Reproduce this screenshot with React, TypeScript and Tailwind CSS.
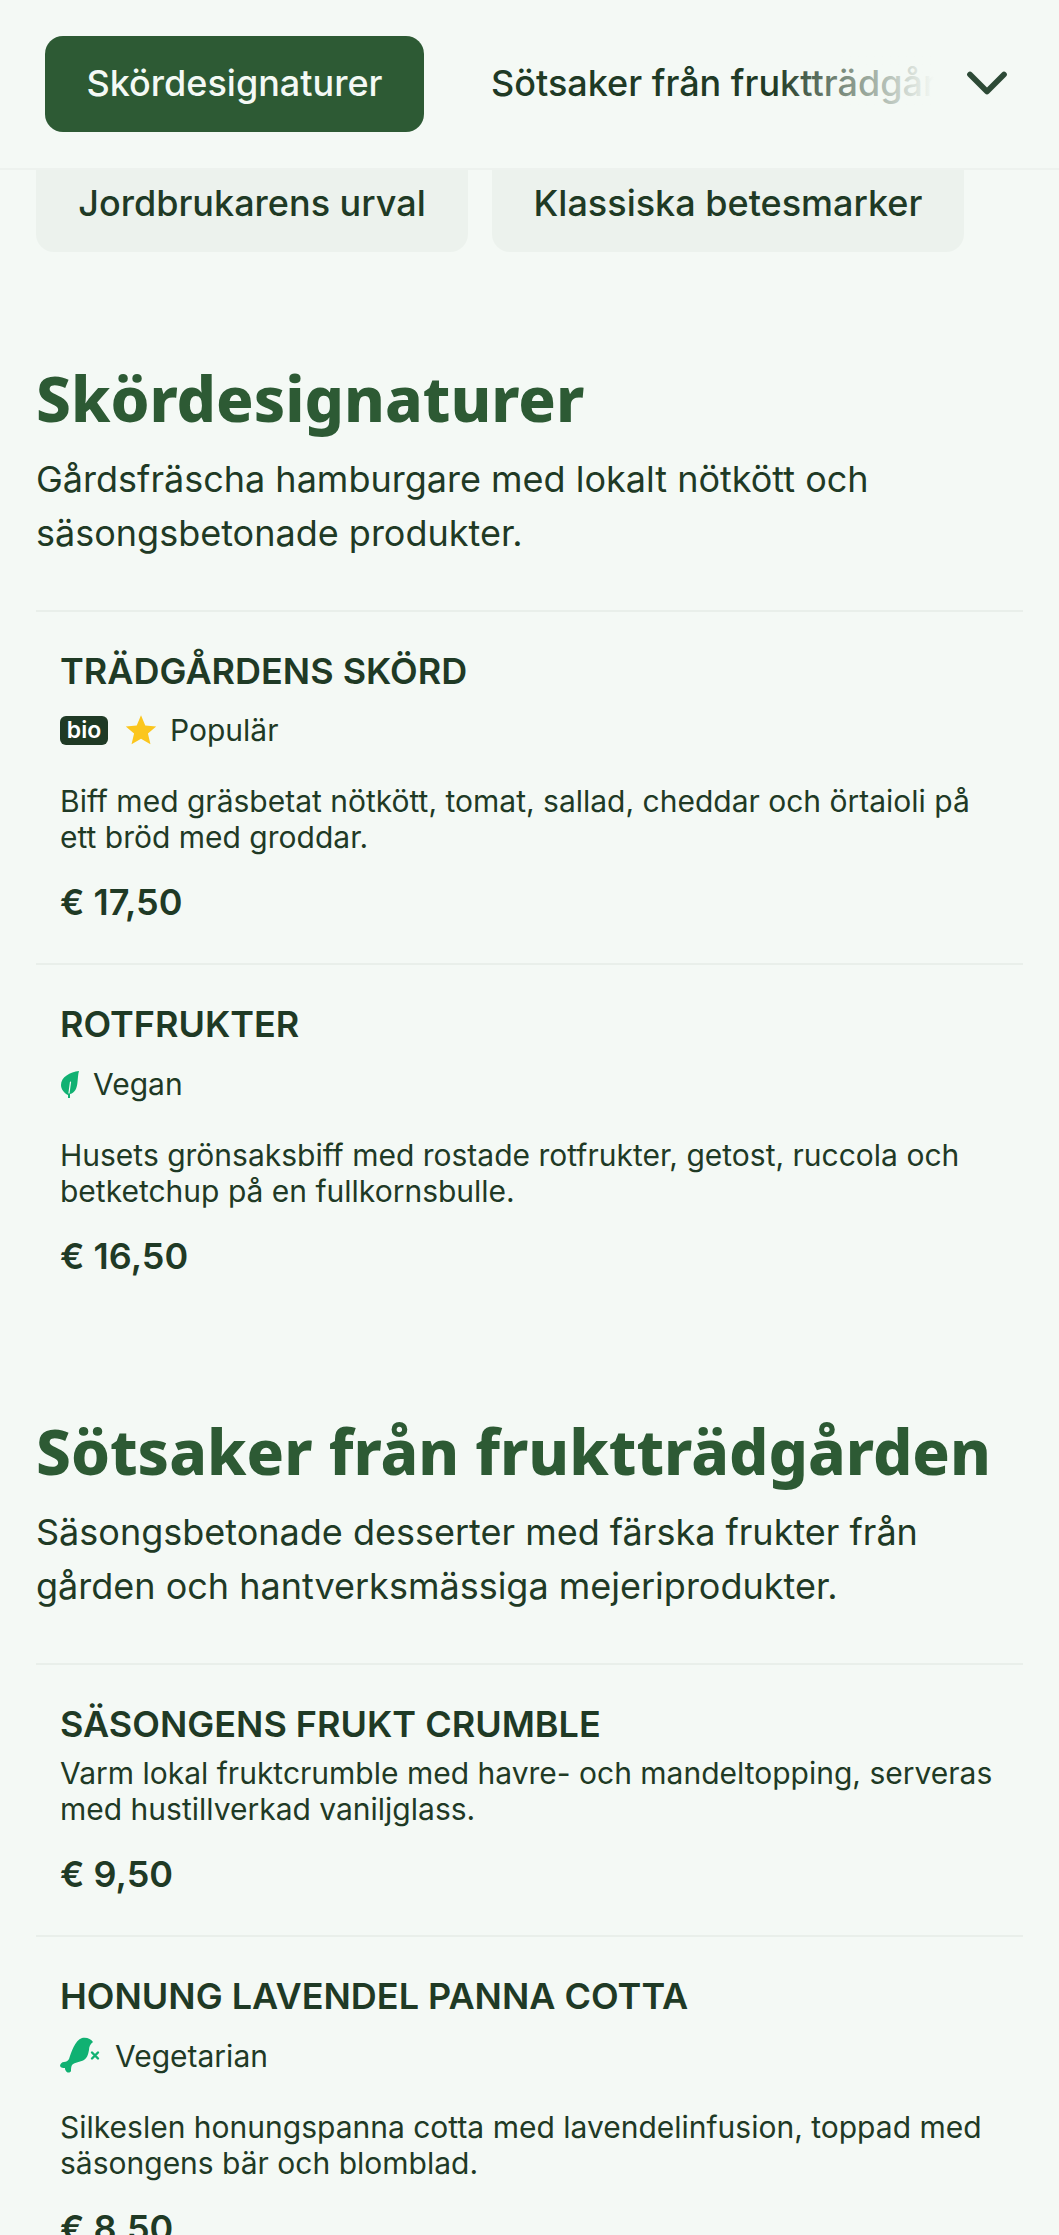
import { ChevronDown } from "lucide-react";

type Tag = "popular" | "vegan" | "vegetarian";

interface Dish {
  name: string;
  tags: Tag[];
  description: string;
  price: string;
}

const harvest: Dish[] = [
  {
    name: "TRÄDGÅRDENS SKÖRD",
    tags: ["popular"],
    description:
      "Biff med gräsbetat nötkött, tomat, sallad, cheddar och örtaioli på ett bröd med groddar.",
    price: "€ 17,50",
  },
  {
    name: "ROTFRUKTER",
    tags: ["vegan"],
    description:
      "Husets grönsaksbiff med rostade rotfrukter, getost, ruccola och betketchup på en fullkornsbulle.",
    price: "€ 16,50",
  },
];

const sweets: Dish[] = [
  {
    name: "SÄSONGENS FRUKT CRUMBLE",
    tags: [],
    description:
      "Varm lokal fruktcrumble med havre- och mandeltopping, serveras med hustillverkad vaniljglass.",
    price: "€ 9,50",
  },
  {
    name: "HONUNG LAVENDEL PANNA COTTA",
    tags: ["vegetarian"],
    description:
      "Silkeslen honungspanna cotta med lavendelinfusion, toppad med säsongens bär och blomblad.",
    price: "€ 8,50",
  },
];

const DishTags = ({ tags }: { tags: Tag[] }) => {
  if (tags.length == 0) return null;
  return (
    <div
      className={
        tags.includes("popular")
          ? "flex items-center h-[36px] mt-[21px] mb-[35px] text-[30px] leading-[36px]"
          : "flex items-center h-[36px] mt-[22px] mb-[35px] text-[30px] leading-[36px]"
      }
    >
      {tags.includes("popular") && (
        <>
          <span className="flex items-center justify-center w-[48px] h-[29px] mr-[17px] rounded-[6px] bg-[#1f3a25] text-white text-[23px] font-semibold leading-none">
            bio
          </span>
          <svg width="32" height="32" viewBox="0 0 24 24" className="mr-[13px]">
            <path
              fill="#fbc61d"
              d="M12 1l3.2 7.6 8.2.7-6.2 5.4 1.9 8L12 18.5l-7.1 4.2 1.9-8L.6 9.3l8.2-.7z"
            />
          </svg>
          <span>Populär</span>
        </>
      )}
      {tags.includes("vegan") && (
        <>
          <svg width="20" height="28" viewBox="0 0 20 28" className="mr-[13px]">
            <path
              fill="#10b172"
              d="M19 1C10 2 1 7 1 15c0 4 3 8 7 10v3h2v-4c5-1 7-6 7.500-12 .5-4 .5-8 1.500-11z"
            />
            <path
              stroke="#f4f9f5"
              strokeWidth="1.2"
              strokeLinecap="round"
              d="M9 23l1.500-11"
            />
          </svg>
          <span>Vegan</span>
        </>
      )}
      {tags.includes("vegetarian") && (
        <>
          <svg width="40" height="38" viewBox="0 0 40 38" className="mr-[15px]">
            <path
              fill="#10b172"
              d="M22 1c5-1 9 1 11 4-3 2-4 5-4 8-1 5-2 8-5 10-4 2-9 2-12 5-1 2-1 4-1 6-1 2-4 2-5 0-1-1-1-2-1-3-2 0-4 0-5-2 0-2 2-4 4-4s4-1 5-3c2-6 6-19 13-21z"
            />
            <path
              stroke="#10b172"
              strokeWidth="2.4"
              strokeLinecap="round"
              d="M32 15.500l6 6M38 15.500l-6 6"
            />
          </svg>
          <span>Vegetarian</span>
        </>
      )}
    </div>
  );
};

const DishRow = ({ dish }: { dish: Dish }) => {
  return (
    <li className="list-none border-t-2 border-[#e9efea] px-[24px] pt-[39px] pb-[41px]">
      <div className="text-[36px] leading-[40px] font-semibold">{dish.name}</div>
      <DishTags tags={dish.tags} />
      <p
        className={
          dish.tags.length == 0
            ? "text-[30px] leading-[36px] mt-[11px]"
            : "text-[30px] leading-[36px]"
        }
      >
        {dish.description}
      </p>
      <div className="text-[36px] leading-[40px] font-semibold mt-[27px]">
        {dish.price}
      </div>
    </li>
  );
};

const MenuSection = ({
  title,
  intro,
  dishes,
}: {
  title: string;
  intro: string;
  dishes: Dish[];
}) => {
  return (
    <section className="mb-[92px]">
      <h2 className="font-['Noto_Sans',sans-serif] text-[62px] leading-[80px] pt-[2px] font-extrabold text-[#2d5a34]">
        {title}
      </h2>
      <p className="text-[36px] leading-[54px] mt-[14px] mb-[50px]">{intro}</p>
      <ul>
        {dishes.map((dish) => (
          <DishRow key={dish.name} dish={dish} />
        ))}
      </ul>
    </section>
  );
};

export default function App() {
  return (
    <div className="w-[1059px] h-[2235px] overflow-hidden bg-[#f4f9f5] text-[#1f3a25] font-['Inter',sans-serif]">
      <header className="flex items-center h-[170px] pl-[45px] border-b-2 border-[#edf2ee]">
        <div className="flex items-center justify-center w-[379px] h-[96px] pb-[2px] rounded-[18px] bg-[#2d5a34] text-[#f4f9f5] text-[36px] font-medium">
          Skördesignaturer
        </div>
        <div className="relative w-[443px] ml-[67px] mb-[2px] overflow-hidden whitespace-nowrap text-[36px] font-medium">
          Sötsaker från fruktträdgården
          <div className="absolute inset-y-0 right-0 w-[160px] bg-gradient-to-r from-transparent to-[#f4f9f5]" />
        </div>
        <ChevronDown size={68} strokeWidth={2} className="ml-[19px] mb-[3px] text-[#2d4a36]" />
      </header>

      <div className="flex gap-[24px] px-[36px] mb-[104px]">
        <div className="flex items-center justify-center w-[432px] h-[82px] pb-[16px] rounded-b-[18px] bg-[#ecf2ed] text-[36px] font-medium">
          Jordbrukarens urval
        </div>
        <div className="flex items-center justify-center w-[472px] h-[82px] pb-[16px] rounded-b-[18px] bg-[#ecf2ed] text-[36px] font-medium">
          Klassiska betesmarker
        </div>
      </div>

      <main className="px-[36px]">
        <MenuSection
          title="Skördesignaturer"
          intro="Gårdsfräscha hamburgare med lokalt nötkött och säsongsbetonade produkter."
          dishes={harvest}
        />
        <MenuSection
          title="Sötsaker från fruktträdgården"
          intro="Säsongsbetonade desserter med färska frukter från gården och hantverksmässiga mejeriprodukter."
          dishes={sweets}
        />
      </main>
    </div>
  );
}
